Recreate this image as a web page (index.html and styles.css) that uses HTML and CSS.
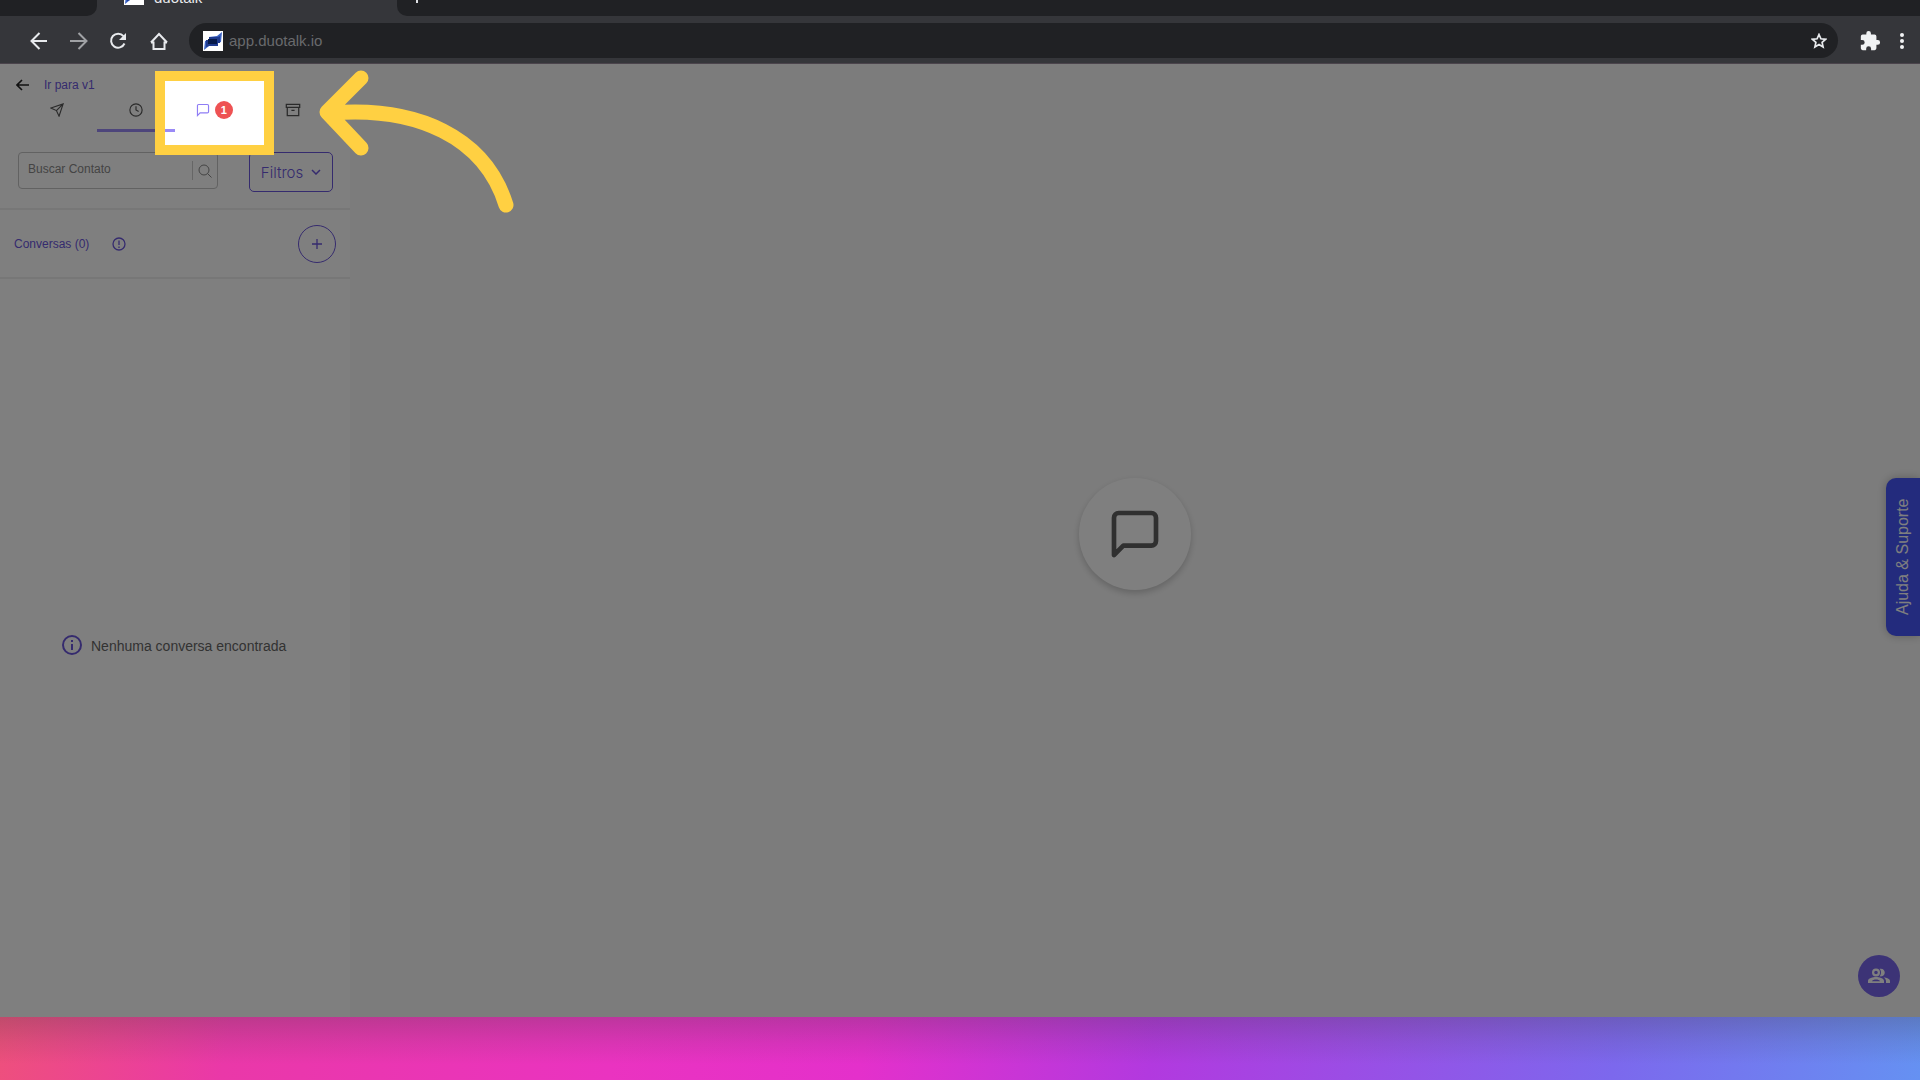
FILE: index.html
```html
<!DOCTYPE html>
<html lang="pt-BR">
<head>
<meta charset="utf-8">
<title>duotalk</title>
<link rel="stylesheet" href="styles.css">
</head>
<body>
<header class="browser">
  <div class="tabstrip">
    <div class="strip-left"></div>
    <div class="browser-tab">
      <svg class="favicon" viewBox="0 0 20 20"><path fill="#fff" d="M0 0h20v20H0z"/><path fill="#3a62c4" d="M1 19l1-9 4-1V6l8-1 5-4-1 10-3 1v2l-9 1z"/><path fill="#1f3b8f" d="M3 9h3V6h9l2-1v7h-2v3H6l-3 1z"/><path fill="#061a4a" d="M5 8h9v5H5z"/></svg>
      <span>duotalk</span>
    </div>
    <div class="strip-right"><svg width="14" height="14" viewBox="0 0 14 14"><path d="M7 0v14M0 7h14" stroke="#dfe1e5" stroke-width="2"/></svg></div>
  </div>
  <div class="toolbar">
    <nav class="nav">
      <button aria-label="Voltar"><svg width="20" height="20" viewBox="0 0 20 20"><path d="M18 10H3M10.500 2L2.500 10l8 8"/></svg></button>
      <button aria-label="Avançar" class="muted"><svg width="20" height="20" viewBox="0 0 20 20"><path d="M1 10h16M9.500 2l8 8-8 8"/></svg></button>
      <button aria-label="Recarregar"><svg width="20" height="20" viewBox="0 0 20 20"><path d="M14.500 5.200A7 7 0 1 0 15.500 12.500"/><path d="M17 2v7h-7z" fill="#e8eaed" stroke="none"/></svg></button>
      <button aria-label="Página inicial"><svg width="20" height="20" viewBox="0 0 20 20"><path d="M2 11.500L10 3l8 8.500M2 11.500h2.500v6.500h11v-6.500H18"/></svg></button>
    </nav>
    <div class="omnibox">
      <svg class="favicon" viewBox="0 0 20 20"><path fill="#fff" d="M0 0h20v20H0z"/><path fill="#3a62c4" d="M1 19l1-9 4-1V6l8-1 5-4-1 10-3 1v2l-9 1z"/><path fill="#1f3b8f" d="M3 9h3V6h9l2-1v7h-2v3H6l-3 1z"/><path fill="#061a4a" d="M5 8h9v5H5z"/></svg>
      <input class="url" aria-label="Endereço" value="app.duotalk.io">
      <button aria-label="Favoritar"><svg width="16" height="16" viewBox="0 0 16 16"><path d="M8 1.500l1.900 4.300 4.700.5-3.500 3.100 1 4.600L8 11.600 3.900 14l1-4.600L1.400 6.300l4.700-.5z" stroke-width="1.700"/></svg></button>
    </div>
    <div class="tools">
      <button aria-label="Extensões"><svg width="22" height="22" viewBox="0 0 24 24"><path fill="#f1f3f4" stroke="none" d="M20.500 11H19V7a2 2 0 0 0-2-2h-4V3.500a2.500 2.500 0 0 0-5 0V5H4a2 2 0 0 0-2 2v3.800h1.500a2.700 2.700 0 0 1 0 5.400H2V20a2 2 0 0 0 2 2h3.800v-1.500a2.700 2.700 0 0 1 5.400 0V22H17a2 2 0 0 0 2-2v-4h1.500a2.500 2.500 0 0 0 0-5z"/></svg></button>
      <button aria-label="Menu"><svg width="6" height="18" viewBox="0 0 6 18"><g fill="#f1f3f4" stroke="none"><circle cx="3" cy="3" r="2"/><circle cx="3" cy="9" r="2"/><circle cx="3" cy="15" r="2"/></g></svg></button>
    </div>
  </div>
</header>

<main class="app">
  <aside class="sidebar">
    <a class="back" href="#"><svg width="14" height="12" viewBox="0 0 14 12"><path d="M13 6H1M6 1L1 6l5 5" stroke="#222" stroke-width="1.600"/></svg><span>Ir para v1</span></a>
    <div class="tabs">
      <button aria-label="Enviadas"><svg width="14" height="14" viewBox="0 0 24 24"><path d="M22.500 1.500L11 13M22.500 1.500L15.500 22.500 11 13 1.500 8.500z"/></svg></button>
      <button aria-label="Em espera" class="selected"><svg width="14" height="14" viewBox="0 0 24 24"><circle cx="12" cy="12" r="10.500"/><path d="M12 5.500V12l4.500 2.500"/></svg></button>
      <button aria-label="Conversas" class="chat"><svg width="14" height="14" viewBox="0 0 24 24"><path d="M21.500 15a2 2 0 0 1-2 2H7l-4.500 4.500V4.500a2 2 0 0 1 2-2h15a2 2 0 0 1 2 2z"/></svg><span class="badge">1</span></button>
      <button aria-label="Arquivadas"><svg width="16" height="14" viewBox="0 0 24 22"><path d="M3 7v13h18V7M1.500 2h21v5h-21zM9.500 11.500h5"/></svg></button>
    </div>
    <div class="search-row">
      <div class="search"><input type="text" aria-label="Buscar Contato" placeholder="Buscar Contato"><button aria-label="Buscar"><svg width="14" height="14" viewBox="0 0 14 14"><circle cx="6" cy="6" r="5"/><path d="M9.500 9.500L13.500 13.500"/></svg></button></div>
      <button class="filter">Filtros <svg width="10" height="6" viewBox="0 0 10 6"><path d="M1 1l4 4 4-4"/></svg></button>
    </div>
    <div class="list-head">
      <span>Conversas (0)</span>
      <svg width="14" height="14" viewBox="0 0 14 14"><circle cx="7" cy="7" r="6"/><path d="M7 3.500V8M7 9.500V11"/></svg>
      <button class="add" aria-label="Nova conversa"><svg width="10" height="10" viewBox="0 0 10 10"><path d="M5 0v10M0 5h10"/></svg></button>
    </div>
    <div class="empty">
      <svg width="22" height="22" viewBox="0 0 22 22"><circle cx="11" cy="11" r="9"/><path d="M11 10v6M11 6v2"/></svg>
      <span>Nenhuma conversa encontrada</span>
    </div>
  </aside>
  <section class="stage">
    <div class="bubble"><svg width="56" height="56" viewBox="0 0 24 24"><path d="M21 15a2 2 0 0 1-2 2H7l-4 4V5a2 2 0 0 1 2-2h14a2 2 0 0 1 2 2z"/></svg></div>
  </section>
  <button class="help">Ajuda &amp; Suporte</button>
  <button class="fab" aria-label="Contatos"><svg width="22" height="16" viewBox="0 0 22 16"><circle cx="8" cy="4.500" r="2.900" fill="none" stroke="#fff" stroke-width="2.200"/><path fill="#fff" fill-rule="evenodd" d="M0 15v-2c0-3 5-4 8-4s8 1 8 4v2zM4 13.200h8c0-1-2.500-1.700-4-1.700s-4 .7-4 1.700zM11.500 .8c7-1.500 7 9 0 7.500 2-2 2-5.500 0-7.500zM15.500 9.200c3 .3 6.500 1.500 6.500 4V15h-4v-2c0-1.600-1-2.800-2.500-3.800z"/></svg></button>
  <div class="spotlight"></div>
  <svg class="arrow" width="200" height="150" viewBox="0 0 200 150"><path d="M42 14L8 48l34 36M12 49C98 42 166 73 187 141"/></svg>
</main>
<footer class="backdrop"></footer>
</body>
</html>
```
FILE: styles.css
```css
* { box-sizing: border-box; }
body {
  margin: 0;
  min-height: 100vh;
  display: flex;
  flex-direction: column;
  font-family: "Liberation Sans", Arial, sans-serif;
}
button, input { font: inherit; color: inherit; }
button {
  display: flex;
  align-items: center;
  justify-content: center;
  padding: 0;
  border: 0;
  background: none;
}
svg { display: block; flex: none; fill: none; }

/* Browser chrome */
.browser { background: #35363a; color: #e8eaed; }
.browser svg { stroke: #e8eaed; stroke-width: 2; }
.tabstrip { display: flex; height: 16px; overflow: hidden; align-items: flex-end; }
.strip-left { width: 97px; height: 16px; background: #202124; border-bottom-right-radius: 10px; }
.browser-tab { width: 300px; height: 42px; padding-left: 27px; display: flex; align-items: center; gap: 10px; font-size: 15px; line-height: 20px; }
.browser-tab span { padding-top: 6px; }
.browser .favicon { width: 20px; height: 20px; stroke: none; }
.strip-right { flex: 1; height: 40px; padding-left: 13px; display: flex; align-items: center; background: #202124; border-bottom-left-radius: 10px; }
.toolbar { height: 48px; padding: 2px 15px 0 29px; display: flex; align-items: center; border-bottom: 1px solid #4b444c; }
.nav { display: flex; gap: 20px; margin-right: 20px; }
.nav .muted { opacity: .6; }
.omnibox { flex: 1; height: 35px; padding: 0 11px 0 14px; display: flex; align-items: center; gap: 6px; border-radius: 18px; background: #202124; }
.url { flex: 1; padding: 0; border: 0; outline: 0; background: none; color: #696a6d; font-size: 15px; }
.tools { margin-left: 21px; display: flex; gap: 18px; }

/* Application */
.app { position: relative; flex: 1; display: flex; overflow: hidden; background: #f9f9f9; }
.sidebar { width: 350px; display: flex; flex-direction: column; background: #fff; color: #6b56dc; font-size: 12px; }
.sidebar svg { stroke: currentColor; }
.back { display: flex; align-items: center; gap: 14px; height: 28px; padding: 14px 16px 0; color: #6b56dc; text-decoration: none; }
.tabs { display: grid; grid-template-columns: repeat(4, 1fr); padding: 0 18px; height: 40px; color: #555; }
.tabs svg { stroke-width: 2; }
.tabs button { padding-bottom: 1px; border-bottom: 3px solid transparent; gap: 5px; }
.tabs .selected { border-color: #9a8af6; }
.tabs .chat { color: #8f7df5; }
.badge { width: 18px; height: 18px; border-radius: 50%; background: #ee5253; color: #fff; font-weight: bold; font-size: 11px; line-height: 18px; text-align: center; }
.search-row { display: flex; justify-content: space-between; align-items: flex-start; padding: 20px 17px 16px 18px; border-bottom: 2px solid #eee; }
.search { width: 200px; height: 37px; display: flex; align-items: center; border: 1px solid #c4c4c4; border-radius: 4px; color: #888; }
.search input { flex: 1; min-width: 0; padding: 0 9px 3px; border: 0; outline: 0; background: none; }
.search input::placeholder { color: #888; opacity: 1; }
.search button { width: 25px; height: 19px; border-left: 1px solid #ccc; }
.filter { width: 84px; height: 40px; gap: 8px; border: 1px solid #6b56dc; border-radius: 5px; font: 300 15px Inter, sans-serif; }
.filter svg { stroke-width: 1.5; }
.list-head { display: flex; align-items: center; gap: 23px; height: 69px; padding: 0 14px; border-bottom: 2px solid #eee; }
.add { width: 38px; height: 38px; margin-left: auto; border: 1px solid #6b56dc; border-radius: 50%; }
.list-head svg { stroke-width: 1.3; }
.empty { flex: 1; display: flex; align-items: center; gap: 8px; padding: 0 61px 6px; color: #6b56dc; font-size: 14px; }
.empty svg { stroke-width: 2; }
.empty span { color: #666; white-space: nowrap; padding-top: 2px; }
.stage { flex: 1; display: flex; align-items: center; justify-content: center; padding-bottom: 14px; }
.bubble { width: 112px; height: 112px; display: flex; align-items: center; justify-content: center; border-radius: 50%; background: #fff; box-shadow: 0 3px 7px rgba(0, 0, 0, .2); }
.bubble svg { stroke: #606060; stroke-width: 2; stroke-linejoin: round; }
.help { position: absolute; right: 0; top: 414px; width: 34px; height: 158px; writing-mode: vertical-rl; transform: rotate(180deg); border-radius: 0 10px 10px 0; background: #4656fa; color: #fff; font-size: 16px; box-shadow: 0 0 10px rgba(0, 0, 0, .25); }
.fab { position: absolute; right: 20px; bottom: 20px; width: 42px; height: 42px; border-radius: 50%; background: #7966ec; }

/* Guided-tour highlight: dims everything outside of the frame */
.spotlight { position: absolute; left: 155px; top: 7px; width: 119px; height: 84px; border: 10px solid #ffd042; box-shadow: 0 0 0 4000px rgba(0, 0, 0, .5); pointer-events: none; }
.arrow { position: absolute; left: 319px; top: 0; stroke: #ffd042; stroke-width: 15; stroke-linecap: round; stroke-linejoin: round; pointer-events: none; }

.backdrop {
  height: 63px;
  background:
    linear-gradient(rgba(60, 60, 60, .26), rgba(60, 60, 60, .1) 40%, transparent 75%),
    linear-gradient(100deg, #ee507c, #ea38a8 12%, #ea33c0 32%, #e430cb 45%, #b239df 60%, #7c68ed 84%, #6591f2);
}
```
